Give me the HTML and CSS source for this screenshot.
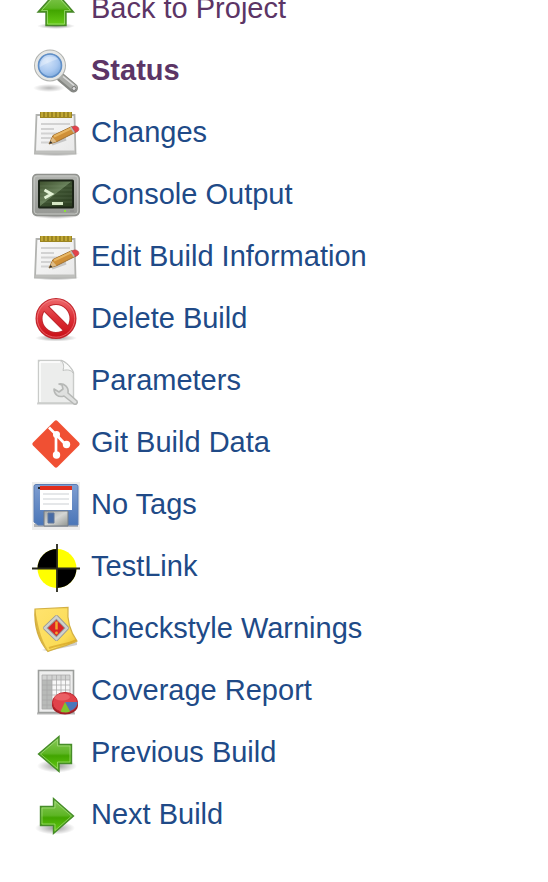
FILE: index.html
```html
<!DOCTYPE html>
<html lang="en">
<head>
<meta charset="utf-8">
<title>Build</title>
<link rel="stylesheet" href="styles.css">
</head>
<body>
<svg class="defs" aria-hidden="true">
  <defs>
    <linearGradient id="green" x1="0" y1="0" x2="0" y2="1"><stop offset="0" stop-color="#8ccb5c"/><stop offset=".48" stop-color="#5db524"/><stop offset=".55" stop-color="#42a500"/><stop offset="1" stop-color="#68cd18"/></linearGradient>
    <radialGradient id="shade"><stop offset="0" stop-color="#000" stop-opacity=".4"/><stop offset=".5" stop-color="#000" stop-opacity=".2"/><stop offset="1" stop-color="#000" stop-opacity="0"/></radialGradient>
    <radialGradient id="lens" cx=".4" cy=".35" r=".65"><stop offset="0" stop-color="#d3e4f9"/><stop offset=".6" stop-color="#a9c8f0"/><stop offset="1" stop-color="#79a7dc"/></radialGradient>
    <linearGradient id="paper" x1="0" y1="0" x2="1" y2="1"><stop offset="0" stop-color="#fafafa"/><stop offset="1" stop-color="#e8e8e8"/></linearGradient>
    <linearGradient id="screen" x1="0" y1="0" x2="1" y2="1"><stop offset="0" stop-color="#405330"/><stop offset=".48" stop-color="#68805a"/><stop offset=".5" stop-color="#3c5130"/><stop offset="1" stop-color="#2a3c20"/></linearGradient>
    <linearGradient id="bezel" x1="0" y1="0" x2="0" y2="1"><stop offset="0" stop-color="#b2b4b0"/><stop offset="1" stop-color="#969894"/></linearGradient>
    <linearGradient id="red" gradientUnits="userSpaceOnUse" x1="0" y1="2" x2="0" y2="43"><stop offset="0" stop-color="#ee6a6d"/><stop offset=".5" stop-color="#dc2e35"/><stop offset="1" stop-color="#c80d16"/></linearGradient>
    <linearGradient id="blue" x1="0" y1="0" x2="0" y2="1"><stop offset="0" stop-color="#7f9ed1"/><stop offset="1" stop-color="#4a76b8"/></linearGradient>
    <linearGradient id="metal" x1="0" y1="0" x2="1" y2="1"><stop offset="0" stop-color="#a5a8a5"/><stop offset=".5" stop-color="#d4d6d4"/><stop offset="1" stop-color="#909490"/></linearGradient>
    <linearGradient id="note" x1="0" y1="0" x2="1" y2="1"><stop offset="0" stop-color="#ffe36e"/><stop offset=".7" stop-color="#fbdc57"/><stop offset="1" stop-color="#e7b92a"/></linearGradient>
  </defs>
  <symbol id="notepad" viewBox="0 0 48 48">
    <ellipse cx="24" cy="43.500" rx="23" ry="3" fill="url(#shade)"/>
    <path d="M4.500 5h38l1 38.500H3z" fill="url(#paper)" stroke="#b2b3b0" stroke-width="1.800"/>
    <path d="M4 40.500h39v3H3z" fill="#bfc0bd"/>
    <path d="M8 2h32v6H8z" fill="#9c8522"/>
    <path d="M10 2v5M14 2v5M18 2v5M22 2v5M26 2v5M30 2v5M34 2v5M38 2v5" stroke="#c9b03a" stroke-width="1.600"/>
    <path d="M9 14h29M9 19h13M9 23.500h20M9 28h10M9 32.500h8" stroke="#d2d2d2" stroke-width="2"/>
    <path d="M20 34l14-5" stroke="#888" stroke-opacity=".4" stroke-width="3"/>
    <path d="M17 34l4-8.500L40 16.500l4 5.500-19 9.500z" fill="#cf9039" stroke="#a0702f"/>
    <path d="M22 26.500l18-8.500" stroke="#e8b662" stroke-width="2"/>
    <path d="M17 34l3.500-7 4 4.500z" fill="#dcbb88"/><path d="M17 34l1.500-3 2 2z" fill="#333"/>
    <path d="M38 17.500l3-1.500 3.500 5-3 2z" fill="#b7bab8"/>
    <path d="M41 16.500c4-2 8 2.500 4.500 5l-2 1-3.500-5.500z" fill="#e4424a" stroke="#b8454a" stroke-width=".7"/>
  </symbol>
</svg>
<nav class="tasks" aria-label="Build tasks">
  <a class="task visited" href="#project">
    <svg class="icon" viewBox="0 0 48 48" aria-hidden="true"><ellipse cx="24" cy="40" rx="19" ry="3" fill="url(#shade)"/><path d="M24 6l17.500 20H34v13.500H14V26H6z" fill="url(#green)" stroke="#47862a" stroke-width="1.400"/><path d="M24 8.500L38.500 24.500h-6V38h-17V24.500h-6z" fill="none" stroke="#b0e38c" stroke-opacity=".65"/></svg>
    <span class="label">Back to Project</span></a>
  <a class="task visited current" href="#status" aria-current="page">
    <svg class="icon" viewBox="0 0 48 48" aria-hidden="true"><ellipse cx="17" cy="40" rx="16" ry="4" fill="url(#shade)" opacity=".7"/><path d="M29 29.500l12.500 10.500" stroke="#858783" stroke-width="9" stroke-linecap="round"/><path d="M30 29.500l12 10" stroke="#a9aba7" stroke-width="6" stroke-linecap="round"/><path d="M31 28.500l11 9" stroke="#ddd" stroke-width="1.500"/><circle cx="42" cy="40.500" r="2" fill="#e0e0e0" stroke="#777"/><circle cx="18" cy="17.500" r="13.500" fill="url(#lens)" stroke="#b0b2af" stroke-width="5"/><circle cx="18" cy="17.500" r="13.500" fill="none" stroke="#e6e7e5" stroke-width="3"/><circle cx="18" cy="17.500" r="11.500" fill="none" stroke="#5f8fc9" stroke-width="1.600"/><path d="M8 19C9 9 18 6 26 11 19 13 13 16 8 19z" fill="#fff" opacity=".3"/></svg>
    <span class="label">Status</span></a>
  <a class="task" href="#changes"><svg class="icon" aria-hidden="true"><use href="#notepad"/></svg><span class="label">Changes</span></a>
  <a class="task" href="#console">
    <svg class="icon" viewBox="0 0 48 48" aria-hidden="true"><ellipse cx="24" cy="43.500" rx="24" ry="3.500" fill="url(#shade)"/><rect x=".7" y="2.500" width="46.600" height="41" rx="4" fill="url(#bezel)" stroke="#8f918d" stroke-width="1.300"/><rect x="2.200" y="4" width="43.600" height="38" rx="3" fill="none" stroke="#c6c8c4"/><rect x="6" y="7.500" width="36" height="29" rx="1.500" fill="#1b2417"/><rect x="8" y="9.500" width="32" height="25" fill="url(#screen)"/><path d="M8 14h32M8 18h32M8 22h32M8 26h32M8 30h32" stroke="#a1b990" stroke-opacity=".18"/><path d="M12.500 18l7 4-7 4" fill="none" stroke="#e2f1d5" stroke-width="3"/><path d="M20 31.500h11" stroke="#d5e7c5" stroke-width="3"/><rect x="32" y="38" width="2" height="2" fill="#8ae635"/><path d="M38 39h4" stroke="#888"/></svg>
    <span class="label">Console Output</span></a>
  <a class="task" href="#edit"><svg class="icon" aria-hidden="true"><use href="#notepad"/></svg><span class="label">Edit Build Information</span></a>
  <a class="task" href="#delete">
    <svg class="icon" viewBox="0 0 48 48" aria-hidden="true"><ellipse cx="24" cy="42" rx="21" ry="3.500" fill="url(#shade)"/><circle cx="24" cy="22.500" r="17" fill="#fff" stroke="#c0272d" stroke-width="7"/><path d="M12.500 11l23 23" stroke="#c0272d" stroke-width="7.500"/><circle cx="24" cy="22.500" r="17" fill="none" stroke="url(#red)" stroke-width="5"/><path d="M12.500 11l23 23" stroke="url(#red)" stroke-width="5.500"/><circle cx="24" cy="22.500" r="18.700" fill="none" stroke="#f68f91" stroke-opacity=".6"/></svg>
    <span class="label">Delete Build</span></a>
  <a class="task" href="#parameters">
    <svg class="icon" viewBox="0 0 48 48" aria-hidden="true"><path d="M5 45.500h37" stroke="#b8b8b8" stroke-width="2" opacity=".6"/><path d="M6.500 2.500h23c4 1 11 8 12 12.500v30h-35z" fill="#ecedec" stroke="#c9cbc9" stroke-width="1.400"/><path d="M8 4h20M8 4v40" stroke="#fff" stroke-width="1.400"/><path d="M29 2.500c3 3 3 6 2 10 4-1 8-1 10.500 3C40 10 34 4 29 2.500z" fill="#f9faf9" stroke="#bfc1bf"/><path d="M27 26c5-1 10 3 9 9l9 8c1 2-1 4-3 3l-10-8c-6 2-10-2-10-7l5 3 4-3-1-4z" fill="#dfe0df" stroke="#b6b8b6" stroke-width="1.600" stroke-linejoin="round"/></svg>
    <span class="label">Parameters</span></a>
  <a class="task" href="#git">
    <svg class="icon" viewBox="0 0 48 48" aria-hidden="true"><path d="M22.500 1q1.500-1.300 3 0L47 22.500q1.300 1.500 0 3L25.500 47q-1.500 1.300-3 0L1 25.500q-1.300-1.500 0-3z" fill="#f05033"/><path d="M17 7.500l7 7V35M24 14.500l9.500 10" fill="none" stroke="#fff" stroke-width="2.700"/><circle cx="24.500" cy="14.500" r="3.500" fill="#fff"/><circle cx="24.500" cy="35" r="3.700" fill="#fff"/><circle cx="34.500" cy="24.500" r="3.700" fill="#fff"/></svg>
    <span class="label">Git Build Data</span></a>
  <a class="task" href="#tags">
    <svg class="icon" viewBox="0 0 48 48" aria-hidden="true"><path d="M0 0h48v48H0z" fill="#ededed"/><path d="M2 42h44v3H2z" fill="#b1b3b6"/><path d="M4 2.500h40q2 0 2 2V43H6l-4-3V4.500q0-2 2-2z" fill="url(#blue)" stroke="#5a7cb2"/><path d="M8 4h32v24H8z" fill="#fff"/><path d="M8 4h32v4H8z" fill="#e12e1c"/><path d="M6 5h2v2H6z" fill="#222"/><path d="M11 12h26M11 17h26M11 22h26" stroke="#e5e7e9" stroke-width="2"/><path d="M12 29h24v15H12z" fill="url(#metal)" stroke="#747c86"/><path d="M16 31h6v10h-6z" fill="#476ca6" stroke="#617699"/></svg>
    <span class="label">No Tags</span></a>
  <a class="task" href="#testlink">
    <svg class="icon" viewBox="0 0 48 48" aria-hidden="true"><circle cx="25" cy="24.500" r="19.500" fill="#ff0"/><path d="M25 24.500V5A19.500 19.500 0 0 0 5.500 24.500zM25 24.500V44A19.500 19.500 0 0 0 44.500 24.500z" fill="#000"/><path d="M25 0v48M0 24.500h48" stroke="#28281b" stroke-width="1.800"/></svg>
    <span class="label">TestLink</span></a>
  <a class="task" href="#checkstyle">
    <svg class="icon" viewBox="0 0 48 48" aria-hidden="true"><path d="M10 44l35-8v3l-29 6z" fill="#777" opacity=".35"/><path d="M3 3l33-1.500c-1 12 2 24 9 33.500-9 5-19 6-29 10.500C6 34 2 18 3 3z" fill="url(#note)" stroke="#d3b044" stroke-width="1.200"/><path d="M3 3c3 16 5 29 13 41C6 34 2 18 3 3z" fill="#cba12e" opacity=".65"/><path d="M17 42c10-4 18-3 27-8" fill="none" stroke="#cf9b20" stroke-width="2" opacity=".6"/><path d="M24.500 11L35 22 24.500 33 13 22z" fill="#da2426" stroke="#979895" stroke-width="4" stroke-linejoin="round"/><path d="M24.500 11L35 22 24.500 33 13 22z" fill="none" stroke="#cfd1cd" stroke-width="2.400"/><path d="M24.500 15.500v8" stroke="#f2a52e" stroke-width="2.500"/><circle cx="24.500" cy="27" r="1.400" fill="#f2a52e"/></svg>
    <span class="label">Checkstyle Warnings</span></a>
  <a class="task" href="#coverage">
    <svg class="icon" viewBox="0 0 48 48" aria-hidden="true"><path d="M5 45.500h38" stroke="#777" stroke-width="2" opacity=".5"/><path d="M6.500 2.500h35v42h-35z" fill="#eee" stroke="#9c9e9c" stroke-width="1.600"/><path d="M10 7h28v34H10z" fill="#f8f8f8"/><path d="M10 7h10v34H10z" fill="#b8bab8"/><path d="M10 7h28v5H10z" fill="#d2d3d2"/><path d="M10 7v34M15 7v34M20 7v34M24.500 7v34M29 7v34M33.500 7v34M38 7v34M10 7h28M10 12h28M10 17h28M10 22h28M10 27h28M10 32h28M10 37h28M10 41h28" stroke="#aaa" stroke-opacity=".75"/><ellipse cx="33" cy="37" rx="13" ry="9.500" fill="#9f2026"/><ellipse cx="33" cy="34.500" rx="12.500" ry="10" fill="#e0424a" stroke="#bc262d"/><path d="M33 34h12.500c0 4-3 7.500-7.500 9z" fill="#4a77bb"/><path d="M33 34l5 9.500c-3 1.500-7 1-9.500 0z" fill="#80c42d"/><ellipse cx="30" cy="29" rx="8" ry="3.500" fill="#ff9999" opacity=".35"/></svg>
    <span class="label">Coverage Report</span></a>
  <a class="task" href="#previous">
    <svg class="icon" viewBox="0 0 48 48" aria-hidden="true"><ellipse cx="25" cy="36" rx="20" ry="6.500" fill="url(#shade)"/><path d="M6.500 24L27 6.500v8h12.500v19H27v8z" fill="url(#green)" stroke="#468c29" stroke-width="1.400"/><path d="M8.500 24L25.500 9.500V16H38v16H25.500v6.500z" fill="none" stroke="#b0e38c" stroke-opacity=".6"/></svg>
    <span class="label">Previous Build</span></a>
  <a class="task" href="#next">
    <svg class="icon" viewBox="0 0 48 48" aria-hidden="true"><ellipse cx="23" cy="36" rx="20" ry="6.500" fill="url(#shade)"/><path d="M41.500 24L21.500 6.500v8h-13v19h13v8z" fill="url(#green)" stroke="#468c29" stroke-width="1.400"/><path d="M39.500 24L23 9.500V16H10v16h13v6.500z" fill="none" stroke="#b0e38c" stroke-opacity=".6"/></svg>
    <span class="label">Next Build</span></a>
</nav>
</body>
</html>
```
FILE: styles.css
```css
body {
  margin: 0;
  background: #fff;
  font-family: "Liberation Sans", Arial, sans-serif;
  font-size: 29px;
}

.defs {
  position: absolute;
  width: 0;
  height: 0;
}

/* The list is scrolled slightly past its first entry. */
.tasks {
  display: flex;
  flex-direction: column;
  align-items: flex-start;
  gap: 14px;
  margin-top: -14px;
  padding: 0 32px;
}

.task {
  display: flex;
  align-items: flex-start;
  gap: 11px;
  color: #204a87;
  text-decoration: none;
}

.task.visited {
  color: #5c3566;
}

.task.current {
  font-weight: bold;
}

.icon {
  flex: none;
  width: 48px;
  height: 48px;
}

.label {
  line-height: 44px;
  white-space: nowrap;
}
```
